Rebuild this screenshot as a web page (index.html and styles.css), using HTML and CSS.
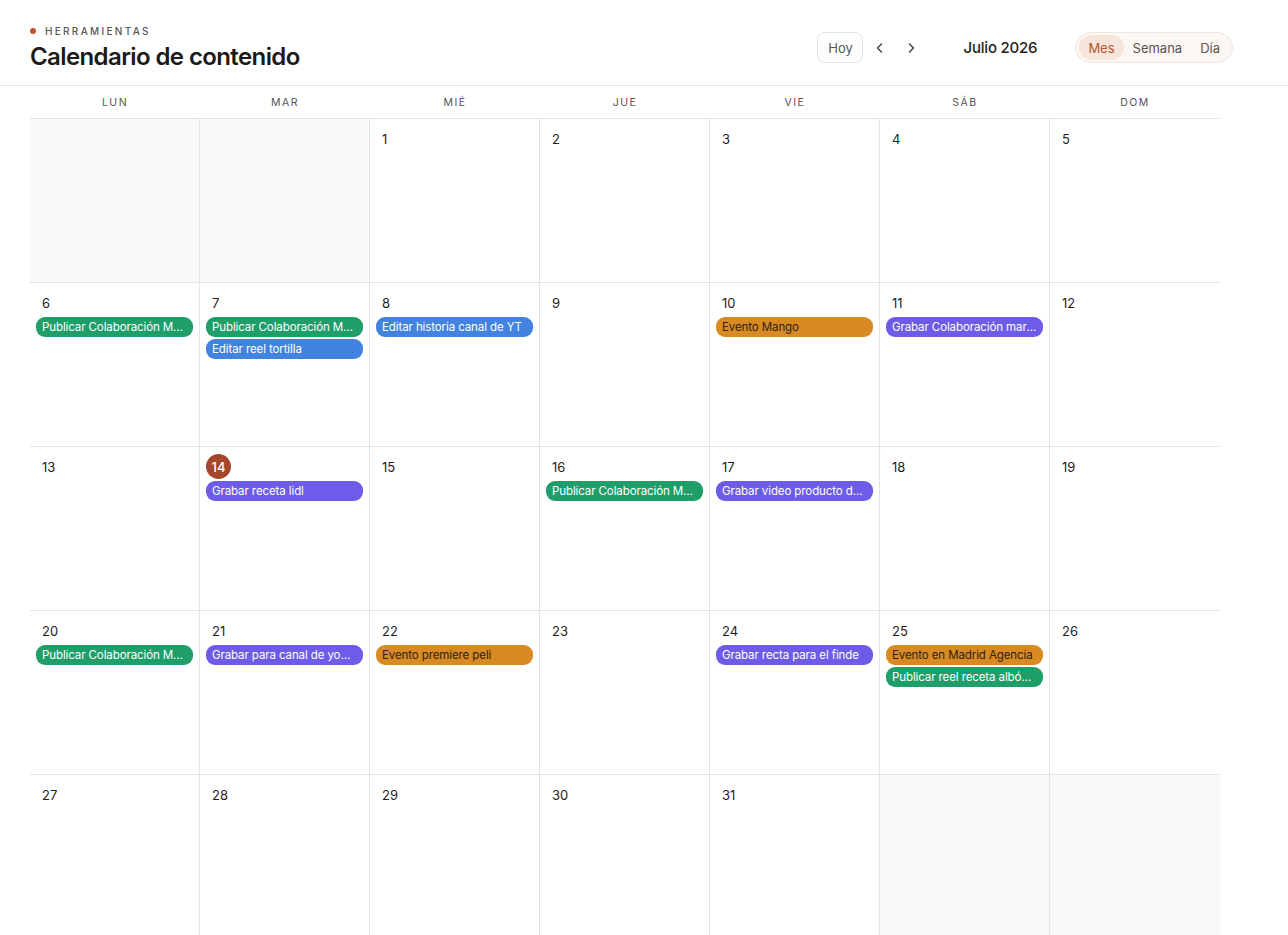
FILE: index.html
```html
<!DOCTYPE html>
<html lang="es">
<head>
<meta charset="utf-8">
<title>Calendario de contenido</title>
<link rel="stylesheet" href="styles.css">
</head>
<body>
<header class="topbar">
  <div class="titles">
    <div class="eyebrow"><span class="dot"></span>HERRAMIENTAS</div>
    <h1 class="title">Calendario de contenido</h1>
  </div>
  <div class="controls">
    <button class="today-btn">Hoy</button>
    <button class="nav-btn prev" aria-label="Anterior"><svg width="14" height="14" viewBox="0 0 14 14"><path d="M8.5 3 L4.5 7 L8.5 11" fill="none" stroke="#444" stroke-width="1.5" stroke-linecap="round" stroke-linejoin="round"/></svg></button>
    <button class="nav-btn next" aria-label="Siguiente"><svg width="14" height="14" viewBox="0 0 14 14"><path d="M5.5 3 L9.5 7 L5.5 11" fill="none" stroke="#444" stroke-width="1.5" stroke-linecap="round" stroke-linejoin="round"/></svg></button>
    <div class="month-label">Julio 2026</div>
    <div class="segmented">
      <button class="seg active">Mes</button>
      <button class="seg">Semana</button>
      <button class="seg">Día</button>
    </div>
  </div>
</header>

<main class="calendar">
  <div class="weekdays">
    <div>LUN</div><div>MAR</div><div>MIÉ</div><div>JUE</div><div>VIE</div><div>SÁB</div><div>DOM</div>
  </div>
  <div class="grid">
    <div class="cell outside"></div>
    <div class="cell outside"></div>
    <div class="cell"><span class="num">1</span></div>
    <div class="cell"><span class="num">2</span></div>
    <div class="cell"><span class="num">3</span></div>
    <div class="cell"><span class="num">4</span></div>
    <div class="cell last"><span class="num">5</span></div>

    <div class="cell"><span class="num">6</span><div class="events"><div class="ev green">Publicar Colaboración Mango julio</div></div></div>
    <div class="cell"><span class="num">7</span><div class="events"><div class="ev green">Publicar Colaboración Mango julio</div><div class="ev blue">Editar reel tortilla</div></div></div>
    <div class="cell"><span class="num">8</span><div class="events"><div class="ev blue">Editar historia canal de YT</div></div></div>
    <div class="cell"><span class="num">9</span></div>
    <div class="cell"><span class="num">10</span><div class="events"><div class="ev orange">Evento Mango</div></div></div>
    <div class="cell"><span class="num">11</span><div class="events"><div class="ev purple">Grabar Colaboración marca julio</div></div></div>
    <div class="cell last"><span class="num">12</span></div>

    <div class="cell"><span class="num">13</span></div>
    <div class="cell"><span class="num today">14</span><div class="events"><div class="ev purple">Grabar receta lidl</div></div></div>
    <div class="cell"><span class="num">15</span></div>
    <div class="cell"><span class="num">16</span><div class="events"><div class="ev green">Publicar Colaboración Mango julio</div></div></div>
    <div class="cell"><span class="num">17</span><div class="events"><div class="ev purple">Grabar video producto de marca</div></div></div>
    <div class="cell"><span class="num">18</span></div>
    <div class="cell last"><span class="num">19</span></div>

    <div class="cell"><span class="num">20</span><div class="events"><div class="ev green">Publicar Colaboración Mango julio</div></div></div>
    <div class="cell"><span class="num">21</span><div class="events"><div class="ev purple">Grabar para canal de youtube</div></div></div>
    <div class="cell"><span class="num">22</span><div class="events"><div class="ev orange">Evento premiere peli</div></div></div>
    <div class="cell"><span class="num">23</span></div>
    <div class="cell"><span class="num">24</span><div class="events"><div class="ev purple">Grabar recta para el finde</div></div></div>
    <div class="cell"><span class="num">25</span><div class="events"><div class="ev orange">Evento en Madrid Agencia</div><div class="ev green">Publicar reel receta albóndigas</div></div></div>
    <div class="cell last"><span class="num">26</span></div>

    <div class="cell"><span class="num">27</span></div>
    <div class="cell"><span class="num">28</span></div>
    <div class="cell"><span class="num">29</span></div>
    <div class="cell"><span class="num">30</span></div>
    <div class="cell"><span class="num">31</span></div>
    <div class="cell outside"></div>
    <div class="cell outside last"></div>
  </div>
</main>
</body>
</html>
```

FILE: styles.css
```css
* { box-sizing: border-box; }

body {
  margin: 0;
  background: #ffffff;
  font-family: "Inter", "Noto Sans", sans-serif;
  color: #1f1d1b;
}

button {
  font-family: inherit;
  cursor: pointer;
}

.topbar {
  height: 86px;
  border-bottom: 1px solid #e6e4e1;
  display: flex;
  justify-content: space-between;
  align-items: flex-start;
  padding: 0 55px 0 30px;
}

.titles {
  padding-top: 25px;
}

.eyebrow {
  display: flex;
  align-items: center;
  font-size: 10px;
  letter-spacing: 2.3px;
  color: #5a5550;
  font-weight: 500;
  height: 12px;
}

.dot {
  width: 6px;
  height: 6px;
  border-radius: 50%;
  background: #c0532f;
  margin-right: 9px;
}

.title {
  margin: 5px 0 0;
  font-size: 24px;
  font-weight: 600;
  letter-spacing: -0.6px;
  line-height: 30px;
  color: #1c1a18;
}

.controls {
  display: flex;
  align-items: center;
  padding-top: 32px;
}

.today-btn {
  height: 31px;
  width: 46px;
  border: 1px solid #e6e1db;
  border-radius: 8px;
  background: #fff;
  font-size: 13px;
  color: #555;
  padding: 0;
}

.nav-btn {
  width: 24px;
  height: 24px;
  border: none;
  background: transparent;
  padding: 0;
  display: flex;
  align-items: center;
  justify-content: center;
}

.nav-btn.prev { margin-left: 5px; }
.nav-btn.next { margin-left: 7px; }

.month-label {
  margin-left: 40px;
  font-size: 15px;
  font-weight: 500;
  color: #1f1d1b;
  white-space: nowrap;
  letter-spacing: -0.2px;
}

.segmented {
  margin-left: 38px;
  display: flex;
  align-items: center;
  height: 31px;
  padding: 0 3px;
  border: 1px solid #ede6de;
  background: #fbf8f4;
  border-radius: 16px;
}

.seg {
  height: 25px;
  border: none;
  background: transparent;
  font-size: 13px;
  color: #5a5550;
  padding: 0 9px;
  border-radius: 13px;
}

.seg.active {
  background: #f7e5db;
  color: #b4562d;
}

.calendar {
  margin-left: 30px;
  width: 1190px;
}

.weekdays {
  display: grid;
  grid-template-columns: repeat(7, 170px);
  height: 33px;
  border-bottom: 1px solid #e6e4e1;
}

.weekdays div {
  display: flex;
  align-items: center;
  justify-content: center;
  font-size: 10.5px;
  letter-spacing: 1.5px;
  color: #5a5550;
  font-weight: 400;
}

.grid {
  display: grid;
  grid-template-columns: repeat(7, 170px);
  grid-auto-rows: 164px;
}

.cell {
  border-right: 1px solid #e6e4e1;
  border-bottom: 1px solid #e6e4e1;
  padding: 7px 6px 0;
  min-width: 0;
}

.cell.last { border-right: none; }

.cell.outside { background: #faf9f7; }

.num {
  display: inline-flex;
  align-items: center;
  height: 25px;
  padding: 0 6px;
  font-size: 13px;
  color: #1f1d1b;
}

.num.today {
  width: 25px;
  padding: 0;
  justify-content: center;
  border-radius: 50%;
  background: #a3462b;
  color: #fff;
  font-weight: 500;
}

.events {
  margin-top: 2px;
  display: flex;
  flex-direction: column;
  gap: 2px;
  width: 157px;
}

.ev {
  height: 20px;
  line-height: 20px;
  border-radius: 9px;
  padding: 0 6px;
  font-size: 11.5px;
  letter-spacing: -0.1px;
  color: #fff;
  white-space: nowrap;
  overflow: hidden;
  text-overflow: ellipsis;
}

.ev.green { background: #1f9e6a; }
.ev.blue { background: #4283e0; }
.ev.purple { background: #6c5ce7; }
.ev.orange { background: #d98a22; color: #2f230f; }
```
